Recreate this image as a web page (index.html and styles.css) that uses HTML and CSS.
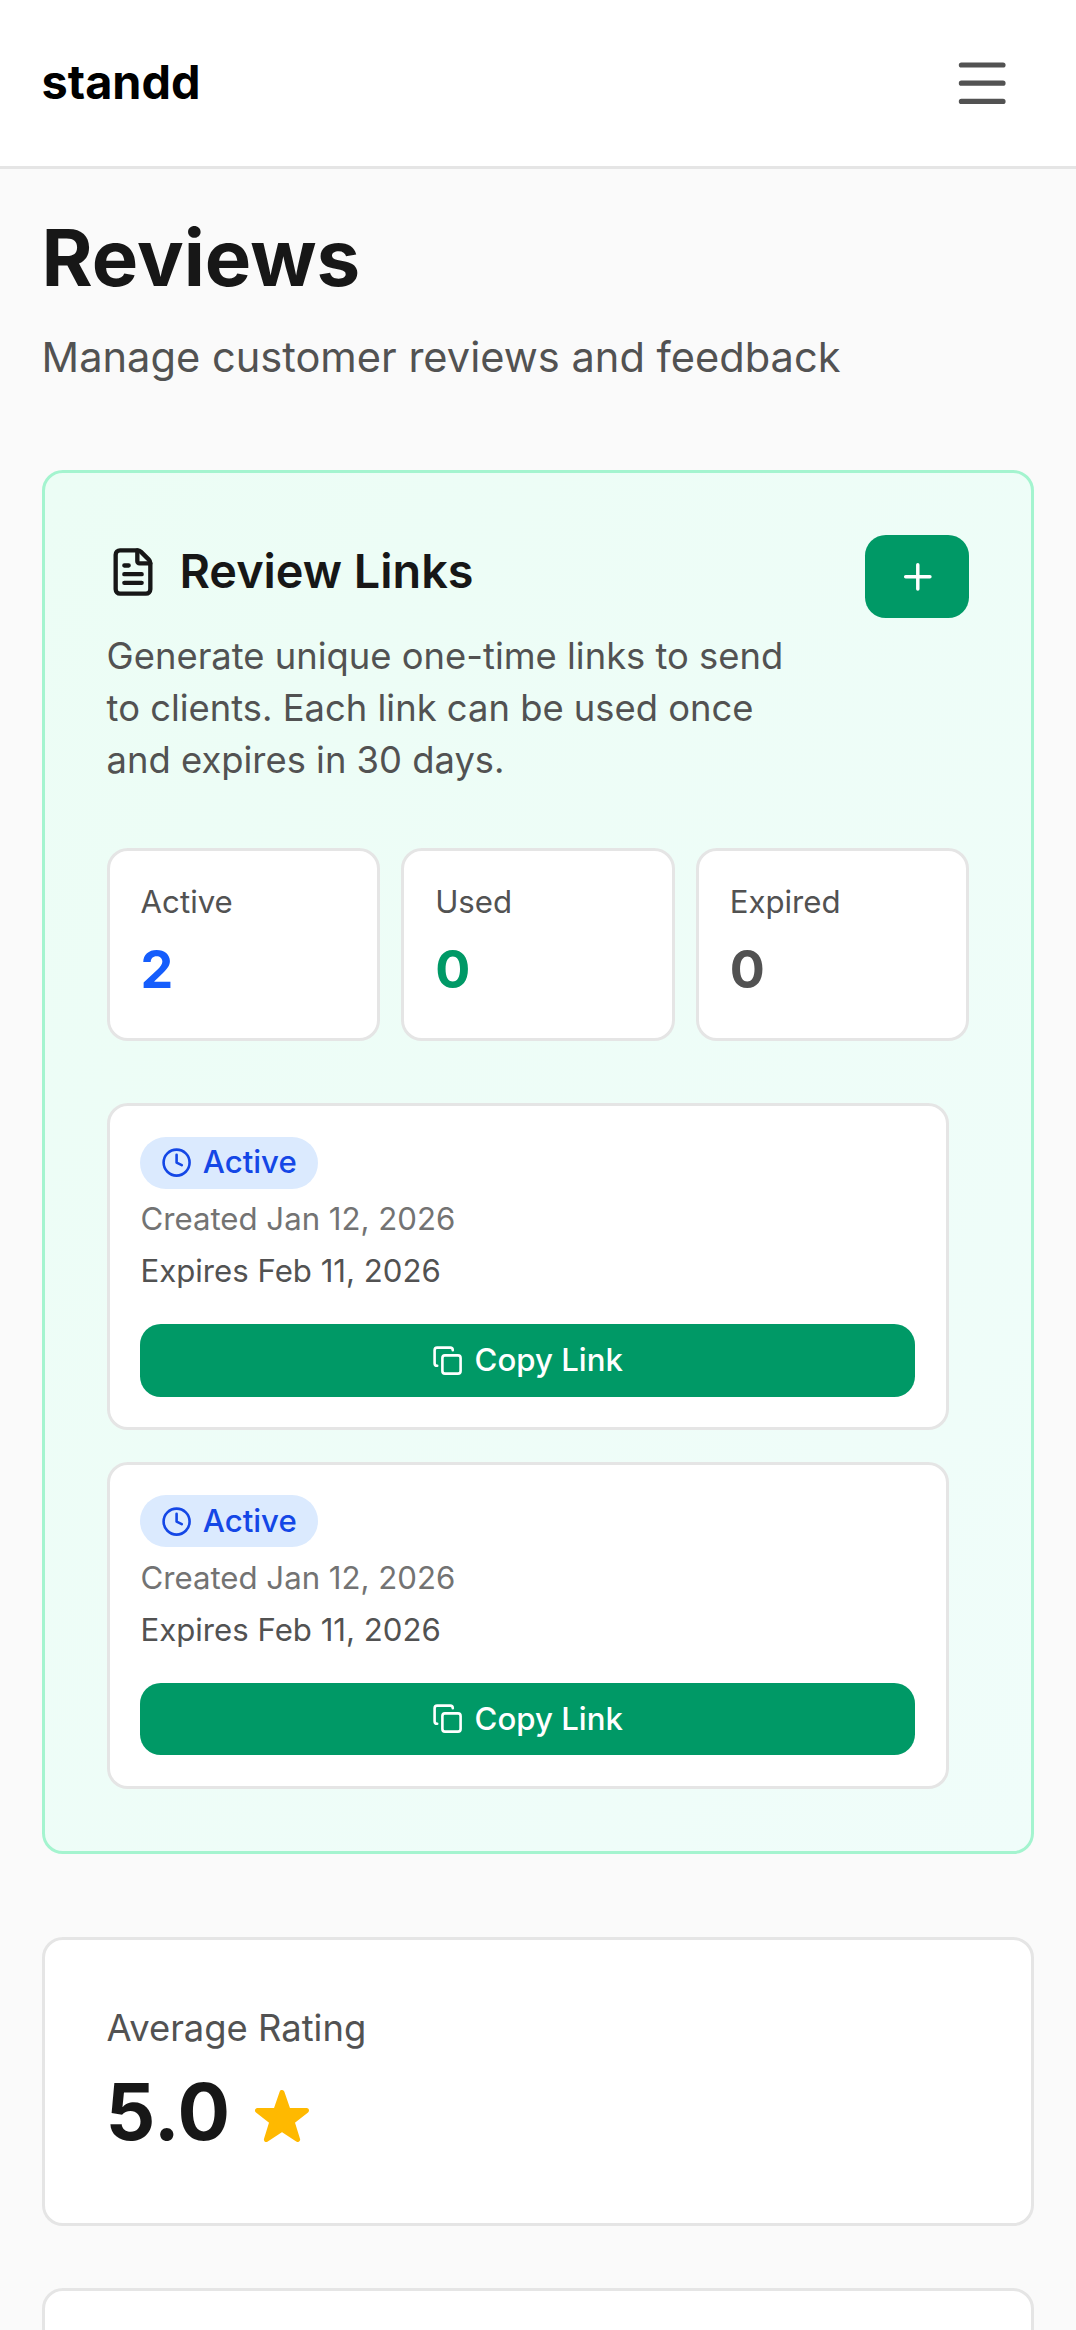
FILE: index.html
```html
<!DOCTYPE html>
<html lang="en">
<head>
    <meta charset="UTF-8">
    <meta name="viewport" content="width=device-width, initial-scale=1.0">
    <title>Reviews - standd</title>
    <link rel="stylesheet" href="styles.css">
</head>
<body>
    <header class="topbar">
        <div class="logo">standd</div>
        <button class="menu-btn" aria-label="Open menu">
            <svg class="icon icon-lg" viewBox="0 0 24 24"><path d="M4 5h16M4 12h16M4 19h16"/></svg>
        </button>
    </header>

    <main>
        <h1>Reviews</h1>
        <p class="subtitle">Manage customer reviews and feedback</p>

        <section class="card links-card">
            <div class="links-head">
                <div class="links-intro">
                    <h2>
                        <svg class="icon icon-md" viewBox="0 0 24 24"><path d="M6 22a2 2 0 0 1-2-2V4a2 2 0 0 1 2-2h8a2.4 2.4 0 0 1 1.704.706l3.588 3.588A2.4 2.4 0 0 1 20 8v12a2 2 0 0 1-2 2z"/><path d="M14 2v5a1 1 0 0 0 1 1h5M10 9H8M16 13H8M16 17H8"/></svg>
                        <span>Review Links</span>
                    </h2>
                    <p>Generate unique one-time links to send to clients. Each link can be used once and expires in 30 days.</p>
                </div>
                <button class="add-btn" aria-label="Create link">
                    <svg class="icon icon-sm" viewBox="0 0 24 24"><path d="M5 12h14M12 5v14"/></svg>
                </button>
            </div>

            <div class="stats">
                <div class="stat">
                    <div class="stat-label">Active</div>
                    <div class="stat-value blue">2</div>
                </div>
                <div class="stat">
                    <div class="stat-label">Used</div>
                    <div class="stat-value green">0</div>
                </div>
                <div class="stat">
                    <div class="stat-label">Expired</div>
                    <div class="stat-value">0</div>
                </div>
            </div>

            <div class="link-list">
                <div class="link-item">
                    <span class="badge">
                        <svg class="icon icon-xs" viewBox="0 0 24 24"><circle cx="12" cy="12" r="10"/><path d="M12 6v6l4 2"/></svg>
                        Active
                    </span>
                    <div class="created">Created Jan 12, 2026</div>
                    <div class="expires">Expires Feb 11, 2026</div>
                    <button class="copy-btn">
                        <svg class="icon icon-xs" viewBox="0 0 24 24"><rect x="8" y="8" width="14" height="14" rx="2"/><path d="M4 16c-1.1 0-2-.9-2-2V4c0-1.1.9-2 2-2h10c1.1 0 2 .9 2 2"/></svg>
                        Copy Link
                    </button>
                </div>
                <div class="link-item">
                    <span class="badge">
                        <svg class="icon icon-xs" viewBox="0 0 24 24"><circle cx="12" cy="12" r="10"/><path d="M12 6v6l4 2"/></svg>
                        Active
                    </span>
                    <div class="created">Created Jan 12, 2026</div>
                    <div class="expires">Expires Feb 11, 2026</div>
                    <button class="copy-btn">
                        <svg class="icon icon-xs" viewBox="0 0 24 24"><rect x="8" y="8" width="14" height="14" rx="2"/><path d="M4 16c-1.1 0-2-.9-2-2V4c0-1.1.9-2 2-2h10c1.1 0 2 .9 2 2"/></svg>
                        Copy Link
                    </button>
                </div>
            </div>
        </section>

        <section class="summary">
            <div class="card rating-card">
                <div class="rating-label">Average Rating</div>
                <div class="rating-value">
                    5.0
                    <svg class="star" viewBox="0 0 54 52"><path d="M27 2.5L33.2 20.5H51.5L37.1 31.7L42.6 49.5L27 39.2L11.4 49.5L16.9 31.7L2.5 20.5H20.8Z"/></svg>
                </div>
            </div>
            <div class="card rating-card"></div>
        </section>
    </main>
</body>
</html>
```
FILE: styles.css
```css
html {
    font-size: 41.6px;
    overflow: hidden;
}
* {
    box-sizing: border-box;
    margin: 0;
    padding: 0;
}
body {
    display: flex;
    flex-direction: column;
    font-family: Inter, "Liberation Sans", sans-serif;
    background-color: #fafafa;
    color: #171717;
    line-height: 1.5;
    height: 100vh;
    overflow: hidden;
}
button {
    font-family: inherit;
    border: none;
    cursor: pointer;
}

/* icons */
.icon {
    fill: none;
    stroke: currentColor;
    stroke-width: 2;
    stroke-linecap: round;
    stroke-linejoin: round;
    flex-shrink: 0;
}
.icon-xs {
    width: 0.75rem;
    height: 0.75rem;
}
.icon-sm {
    width: 1rem;
    height: 1rem;
}
.icon-md {
    width: 1.25rem;
    height: 1.25rem;
}
.icon-lg {
    width: 1.5rem;
    height: 1.5rem;
}

/* top bar */
.topbar {
    display: flex;
    align-items: center;
    justify-content: space-between;
    flex-shrink: 0;
    height: 169px;
    padding: 0 1rem;
    background: white;
    border-bottom: 3px solid #e5e5e5;
}
.logo {
    padding-bottom: 2px;
    font-size: 1.125rem;
    font-weight: 700;
    color: black;
}
.menu-btn {
    display: flex;
    padding: 0.5rem;
    background: none;
    color: #525252;
}

main {
    flex: 1;
    min-height: 0;
    overflow: hidden;
    padding: 1rem;
}
h1 {
    font-size: 1.875rem;
    line-height: 2.25rem;
    font-weight: 700;
}
.subtitle {
    margin-top: 22px;
    color: #525252;
}
.card {
    background: white;
    border: 3px solid #e5e5e5;
    border-radius: 0.5rem;
    padding: 62px;
}

/* review links */
.links-card {
    margin-top: 81.6px;
    background: linear-gradient(to bottom right in oklab, #ecfdf5, #f0fdfa);
    border-color: #a4f4cf;
}
.links-head {
    display: flex;
    align-items: flex-start;
    justify-content: space-between;
    gap: 1rem;
}
.links-intro {
    flex: 1;
}
h2 {
    display: flex;
    align-items: center;
    gap: 0.5rem;
    font-size: 1.125rem;
    line-height: 1.75rem;
    font-weight: 600;
}
h2 span {
    padding-bottom: 1px;
}
.links-intro p {
    margin-top: 0.5rem;
    font-size: 0.875rem;
    line-height: 1.25rem;
    color: #525252;
}
.add-btn {
    display: flex;
    align-items: center;
    justify-content: center;
    width: 2.5rem;
    height: 2rem;
    border-radius: 0.5rem;
    background: #009966;
    color: white;
}

.stats {
    display: grid;
    grid-template-columns: repeat(3, 1fr);
    gap: 0.5rem;
    margin-top: 1.5rem;
}
.stat {
    background: white;
    border: 3px solid #e5e5e5;
    border-radius: 0.5rem;
    padding: 31px;
}
.stat-label {
    font-size: 0.75rem;
    line-height: 1rem;
    color: #525252;
}
.stat-value {
    margin-top: 0.25rem;
    font-size: 1.25rem;
    line-height: 1.75rem;
    font-weight: 700;
    color: #525252;
}
.stat-value.blue {
    color: #155dfc;
}
.stat-value.green {
    color: #009966;
}

.link-list {
    display: flex;
    flex-direction: column;
    gap: 0.75rem;
    margin-top: 62px;
    padding-right: 0.5rem;
}
.link-item {
    display: flex;
    flex-direction: column;
    align-items: flex-start;
    background: white;
    border: 3px solid #e5e5e5;
    border-radius: 0.5rem;
    padding: 30.8px;
    font-size: 0.75rem;
    line-height: 1rem;
}
.badge {
    display: flex;
    align-items: center;
    gap: 0.25rem;
    padding: 0.125rem 0.5rem;
    border-radius: 1rem;
    background: #dbeafe;
    color: #1447e6;
    font-weight: 500;
}
.created {
    margin-top: 0.25rem;
    color: #737373;
}
.expires {
    margin-top: 0.25rem;
    color: #525252;
}
.copy-btn {
    display: flex;
    align-items: center;
    justify-content: center;
    gap: 11px;
    width: 100%;
    height: 1.75rem;
    margin-top: 0.75rem;
    border-radius: 0.5rem;
    background: #009966;
    color: white;
    font-size: 0.75rem;
    font-weight: 500;
}

/* rating summary */
.summary {
    display: grid;
    gap: 1.5rem;
    margin-top: 2rem;
}
.rating-card {
    height: 288.6px;
}
.rating-label {
    font-size: 0.875rem;
    line-height: 1.25rem;
    color: #525252;
}
.rating-value {
    display: flex;
    align-items: center;
    gap: 25px;
    margin: 0.25rem 0 0 -1px;
    font-size: 1.875rem;
    line-height: 2.25rem;
    font-weight: 700;
}
.star {
    width: 54px;
    height: 52px;
    margin-top: 9px;
    fill: #ffb900;
    stroke: #ffb900;
    stroke-width: 5;
    stroke-linejoin: round;
}
```
